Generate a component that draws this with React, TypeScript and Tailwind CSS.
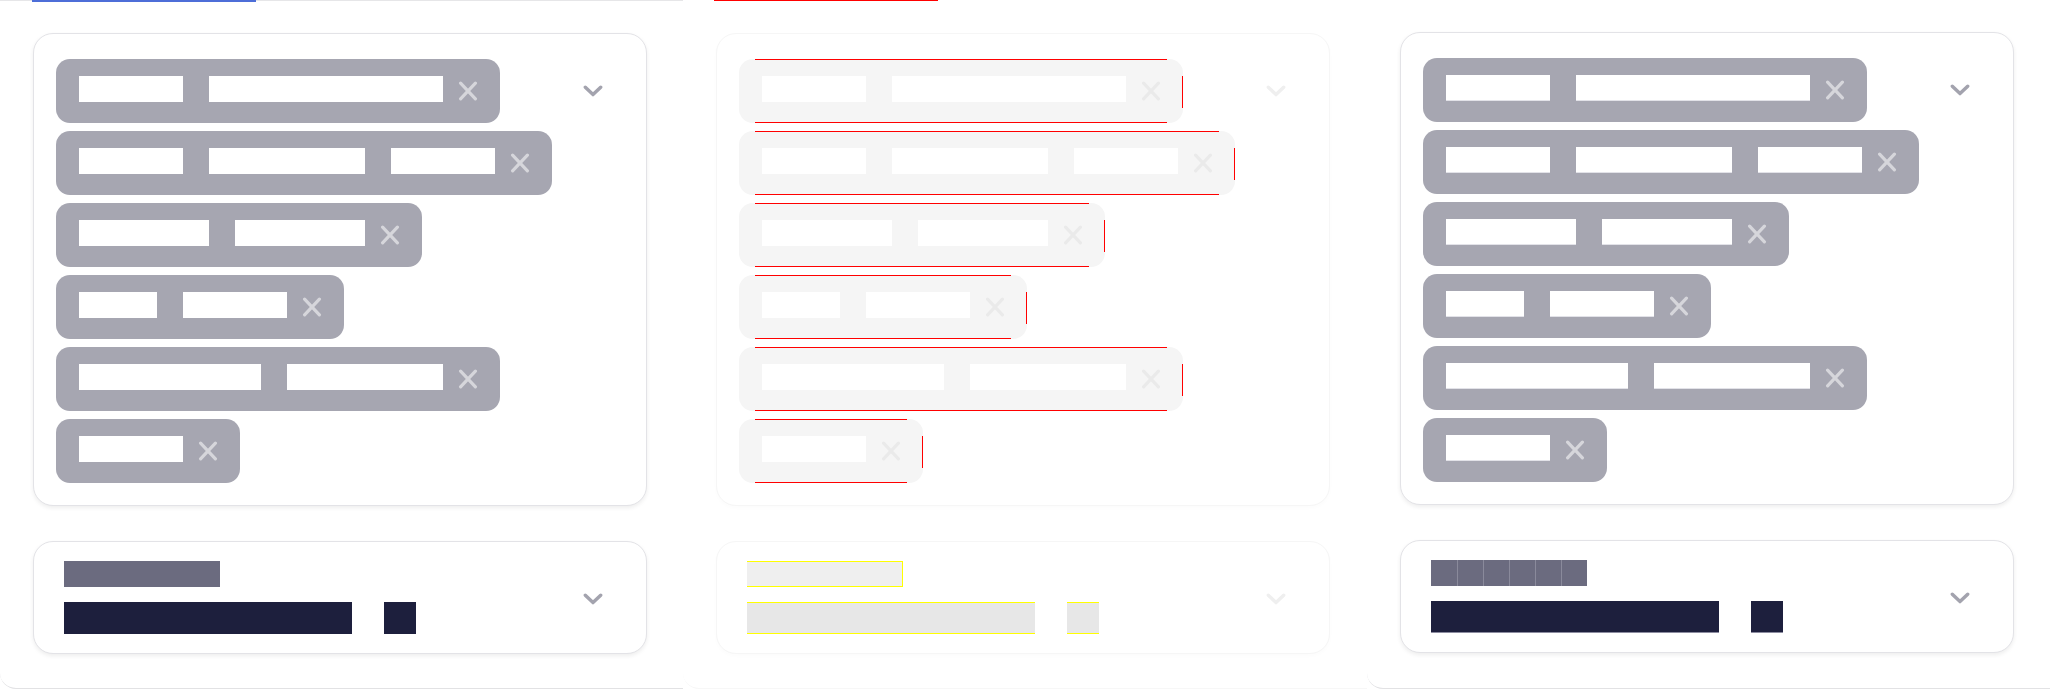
import clsx from "clsx";

type Variant = "expected" | "diff" | "actual";

// each chip holds "words", a word is n glyph blocks of 26px
const CHIPS: number[][] = [[4, 9], [4, 6, 4], [5, 5], [3, 4], [7, 6], [4]];

function XMark({ color }: { color: string }) {
  return (
    <svg width="20" height="20" viewBox="0 0 20 20" className="ml-[15px] shrink-0">
      <path
        d="M2.6 2.2 L17.4 17.8 M17.4 2.2 L2.6 17.8"
        stroke={color}
        strokeWidth="3.2"
        strokeLinecap="round"
        fill="none"
      />
    </svg>
  );
}

function Chevron({ color, className }: { color: string; className?: string }) {
  return (
    <svg width="20" height="12" viewBox="0 0 20 12" className={clsx("shrink-0", className)}>
      <path
        d="M2.3 2.2 L10 9.6 L17.7 2.2"
        stroke={color}
        strokeWidth="3.4"
        strokeLinecap="round"
        strokeLinejoin="round"
        fill="none"
      />
    </svg>
  );
}

function Chip({ words, variant }: { words: number[]; variant: Variant }) {
  const diff = variant === "diff";
  return (
    <div
      className={clsx(
        "relative flex h-[64px] w-fit items-center rounded-[14px] pl-[23px] pr-[22px]",
        diff ? "bg-[#f5f5f5]" : "bg-[#a6a6b1]"
      )}
    >
      <div className="mb-[4px] flex gap-[26px]">
        {words.map((n, i) => (
          <span
            key={i}
            className={clsx(
              "block h-[26px] bg-white",
              variant === "actual" && "shadow-[inset_0_-1px_0_#e2e2e8]"
            )}
            style={{ width: n * 26 }}
          />
        ))}
      </div>
      <XMark color={diff ? "#eaeaea" : "#d6d6db"} />
      {diff && (
        <>
          <span className="absolute left-[16px] right-[16px] top-0 h-px bg-[#ff0000]" />
          <span className="absolute bottom-0 left-[16px] right-[16px] h-px bg-[#ff0000]" />
          <span className="absolute bottom-[15px] right-0 top-[17px] w-px bg-[#ff0000]" />
        </>
      )}
    </div>
  );
}

function Panel({ variant }: { variant: Variant }) {
  const diff = variant === "diff";
  const card = diff
    ? "rounded-[20px] border border-[#f6f6f6] bg-white shadow-[0_2px_4px_rgba(0,0,0,0.015)]"
    : "rounded-[20px] border border-[#e3e3e7] bg-white shadow-[0_2px_4px_rgba(0,0,0,0.07)]";

  return (
    <div className="h-[690px] overflow-hidden">
      <div
        className={clsx(
          "h-[689px] rounded-bl-[16px] border-b bg-white",
          diff ? "border-[#f7f7f7]" : "border-[#e2e2e4]"
        )}
      >
        {variant === "expected" && (
          <div className="h-px bg-[#e6e6e8]">
            <div className="ml-[32px] h-[2px] w-[224px] bg-[#4d6ed8]" />
          </div>
        )}
        {diff && (
          <div className="h-px">
            <div className="ml-[31px] h-px w-[224px] bg-[#ff0000]" />
          </div>
        )}

        <div className="pl-[33px] pt-[32px]">
          {/* tags */}
          <div className={clsx("flex w-[614px] pb-[22px] pl-[22px] pr-[43px] pt-[25px]", card)}>
            <div className="flex flex-1 flex-col gap-[8px]">
              {CHIPS.map((w, i) => (
                <Chip key={i} words={w} variant={variant} />
              ))}
            </div>
            <div className="flex h-[64px] items-center">
              <Chevron color={diff ? "#efefef" : "#a3a3ae"} />
            </div>
          </div>

          {/* summary */}
          <div className={clsx("mt-[35px] flex w-[614px] items-center py-[19px] pl-[30px] pr-[43px]", card)}>
            <div className="flex flex-1 flex-col gap-[15px]">
              {variant === "expected" && <div className="h-[26px] w-[156px] bg-[#6b6b7f]" />}
              {variant === "diff" && (
                <div className="h-[26px] w-[156px] border-y border-r border-[#ffff00] bg-[#efefef]" />
              )}
              {variant === "actual" && (
                <div className="flex h-[26px] w-[156px]">
                  {[0, 1, 2, 3, 4, 5].map((i) => (
                    <span
                      key={i}
                      className={clsx("block h-full w-[26px] bg-[#6b6b7f]", i > 0 && "border-l border-[#8a8a9b]")}
                    />
                  ))}
                </div>
              )}
              <div className="flex gap-[32px]">
                <span
                  className={clsx(
                    "block h-[32px] w-[288px]",
                    diff ? "border-y border-[#ffff00] bg-[#e7e7e7]" : "bg-[#1d1f3d]",
                    variant === "actual" && "shadow-[inset_0_-1px_0_#8c8ca0]"
                  )}
                />
                <span
                  className={clsx(
                    "block h-[32px] w-[32px]",
                    diff ? "border-y border-[#ffff00] bg-[#e7e7e7]" : "bg-[#1d1f3d]",
                    variant === "actual" && "shadow-[inset_0_-1px_0_#8c8ca0]"
                  )}
                />
              </div>
            </div>
            <Chevron color={diff ? "#efefef" : "#a3a3ae"} className="mt-[2px]" />
          </div>
        </div>
      </div>
    </div>
  );
}

export default function App() {
  return (
    <div className="grid h-[690px] w-[2050px] grid-cols-3 overflow-hidden bg-white font-['Inter',sans-serif]">
      <Panel variant="expected" />
      <Panel variant="diff" />
      <Panel variant="actual" />
    </div>
  );
}
